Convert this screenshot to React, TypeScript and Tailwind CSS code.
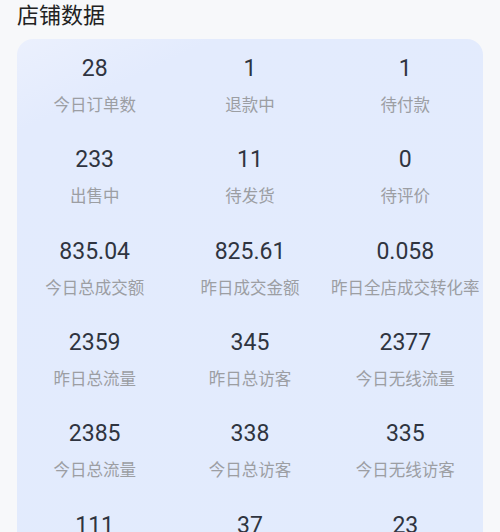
import React from "react";

const items: [string, string][] = [
  ["28", "今日订单数"],
  ["1", "退款中"],
  ["1", "待付款"],
  ["233", "出售中"],
  ["11", "待发货"],
  ["0", "待评价"],
  ["835.04", "今日总成交额"],
  ["825.61", "昨日成交金额"],
  ["0.058", "昨日全店成交转化率"],
  ["2359", "昨日总流量"],
  ["345", "昨日总访客"],
  ["2377", "今日无线流量"],
  ["2385", "今日总流量"],
  ["338", "今日总访客"],
  ["335", "今日无线访客"],
  ["111", "昨日无线访客"],
  ["37", "昨日订单数"],
  ["23", "今日无线订单"],
];

export default function App() {
  return (
    <div className="w-[500px] h-[532px] overflow-hidden bg-[#f7f8fa]">
      <div
        className="pl-[17px] pt-[1px] text-[22px] leading-[24px] text-[#222]"
        style={{ fontFamily: '"Noto Sans CJK SC", "Noto Sans", sans-serif' }}
      >
        店铺数据
      </div>
      <div className="mx-[17px] mt-[14px] rounded-2xl bg-[linear-gradient(155deg,#ebf0fd_0%,#e3ebfd_12%,#e2ebfd_100%)] pt-4 pb-6">
        <div className="grid grid-cols-3 gap-y-[31.33px]">
          {items.map(([n, l], i) => (
            <div key={i} className="flex flex-col items-center">
              <div
                className="text-[23px] leading-[28px] text-[#2f3440]"
                style={{ fontFamily: "Roboto, sans-serif" }}
              >
                {n}
              </div>
              <div
                className="mt-[10px] text-[16.5px] leading-[22px] text-[#9c9ea3] whitespace-nowrap"
                style={{ fontFamily: '"Noto Sans CJK SC", sans-serif' }}
              >
                {l}
              </div>
            </div>
          ))}
        </div>
      </div>
    </div>
  );
}
